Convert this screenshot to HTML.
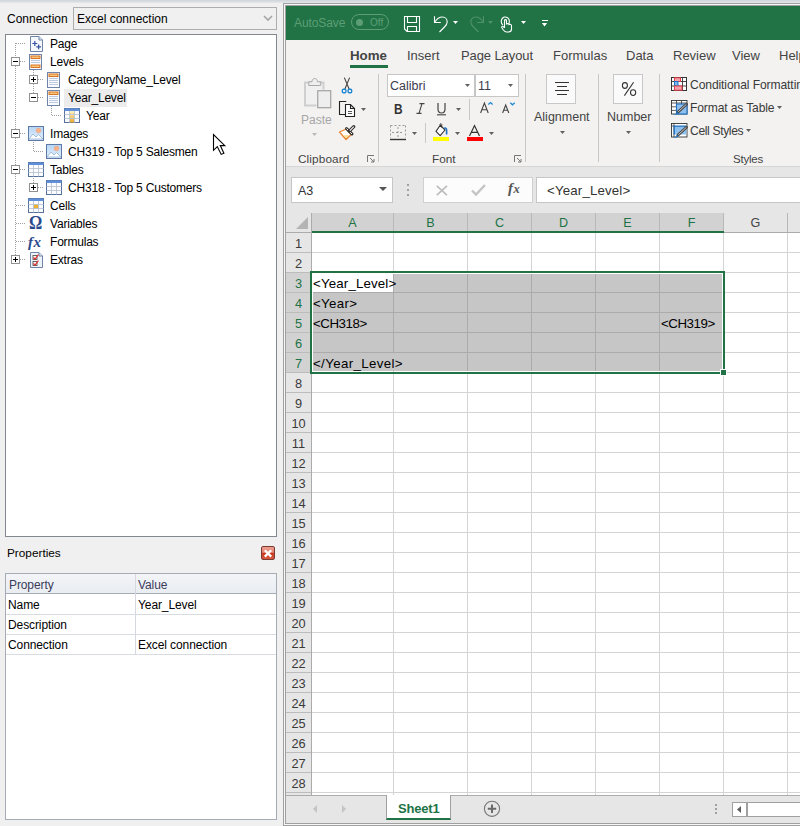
<!DOCTYPE html>
<html><head><meta charset="utf-8">
<style>
*{box-sizing:border-box;margin:0;padding:0}
html,body{width:800px;height:826px;overflow:hidden}
body{position:relative;background:#f0f0f0;font-family:"Liberation Sans",sans-serif;font-size:12px;color:#000}
div{position:absolute}
.t{white-space:nowrap;line-height:1}
svg{position:absolute;overflow:visible}
.tr{height:18px;line-height:20px;font-size:12px;letter-spacing:-0.2px;white-space:nowrap;color:#000}
.exp{width:9px;height:9px;border:1px solid #919191;background:#fff}
.exp:before{content:"";position:absolute;left:1px;top:3px;width:5px;height:1px;background:#000}
.exp.p:after{content:"";position:absolute;left:3px;top:1px;width:1px;height:5px;background:#000}
.dv{width:1px;background-image:linear-gradient(#a0a0a0 50%,transparent 50%);background-size:1px 2px}
.dh{height:1px;background-image:linear-gradient(90deg,#a0a0a0 50%,transparent 50%);background-size:2px 1px}
.tab{top:48px;font-size:13px;color:#444;line-height:16px;white-space:nowrap}
.grp{top:152px;font-size:11.8px;color:#444;line-height:14px;white-space:nowrap}
.sep{width:1px;background:#c8c8c8}
.arr{width:5px;height:3px;background:#606060;clip-path:polygon(0 0,100% 0,50% 100%)}
.rh{left:286px;width:25px;height:19px;line-height:22px;text-align:center;font-size:12.8px;color:#3a3a3a;background:#e6e6e6}
.rh.s{background:#d2d2d2;color:#217346}
.ch{top:213px;height:18px;line-height:21px;text-align:center;font-size:12.6px;color:#444;background:#e6e6e6}
.ch.s{background:#d2d2d2;color:#217346}
.cell{font-size:13.3px;line-height:21px;white-space:nowrap;color:#000}
</style></head><body>

<div style="left:0;top:0;width:800px;height:3px;background:linear-gradient(#cfd4da,#e4e7ea)"></div>
<div class="t" style="left:7px;top:13px;font-size:12px">Connection</div>
<div style="left:73px;top:7px;width:204px;height:23px;border:1px solid #adadad;background:#f0f0f0"></div>
<div class="t" style="left:77px;top:13px;font-size:12px">Excel connection</div>
<svg style="left:263px;top:15px" width="10" height="7"><path d="M1 1 L5 5 L9 1" fill="none" stroke="#a6a6a6" stroke-width="1.6"/></svg>
<div style="left:5px;top:34px;width:272px;height:503px;border:1px solid #828790;background:#fff"></div>
<div class="dv" style="left:15px;top:43px;height:14px"></div>
<div class="dv" style="left:15px;top:66px;height:63px"></div>
<div class="dv" style="left:15px;top:138px;height:27px"></div>
<div class="dv" style="left:15px;top:174px;height:81px"></div>
<div class="dh" style="left:16px;top:43px;width:10px"></div>
<div class="dh" style="left:20px;top:61px;width:6px"></div>
<div class="dh" style="left:20px;top:133px;width:6px"></div>
<div class="dh" style="left:20px;top:169px;width:6px"></div>
<div class="dh" style="left:20px;top:259px;width:6px"></div>
<div class="dh" style="left:16px;top:205px;width:10px"></div>
<div class="dh" style="left:16px;top:223px;width:10px"></div>
<div class="dh" style="left:16px;top:241px;width:10px"></div>
<div class="dv" style="left:33px;top:70px;height:5px"></div>
<div class="dv" style="left:33px;top:84px;height:9px"></div>
<div class="dh" style="left:38px;top:79px;width:6px"></div>
<div class="dh" style="left:38px;top:97px;width:6px"></div>
<div class="dv" style="left:51px;top:106px;height:10px"></div>
<div class="dh" style="left:52px;top:115px;width:10px"></div>
<div class="dv" style="left:33px;top:142px;height:10px"></div>
<div class="dh" style="left:34px;top:151px;width:10px"></div>
<div class="dv" style="left:33px;top:178px;height:5px"></div>
<div class="dh" style="left:38px;top:187px;width:6px"></div>
<div class="exp" style="left:11px;top:57px"></div>
<div class="exp p" style="left:29px;top:75px"></div>
<div class="exp" style="left:29px;top:93px"></div>
<div class="exp" style="left:11px;top:129px"></div>
<div class="exp" style="left:11px;top:165px"></div>
<div class="exp p" style="left:29px;top:183px"></div>
<div class="exp p" style="left:11px;top:255px"></div>
<div style="left:64px;top:89px;width:63px;height:18px;background:#ececec"></div>
<svg style="left:30px;top:36px" width="13" height="16"><path d="M0.5 0.5 H9 L12.5 4 V15.5 H0.5 Z" fill="#f5f8fc" stroke="#6f84a6"/><path d="M9 0.5 V4 H12.5" fill="#dfe7f2" stroke="#6f84a6"/><path d="M2.3 7.5 H7.3 M4.8 5 V10 M6.3 10.8 H11 M8.65 8.5 V13.2" stroke="#3552a0" stroke-width="1.2"/></svg>
<svg style="left:29px;top:54px" width="13" height="16"><rect x="0.5" y="0.5" width="12" height="15" fill="#f9fbfe" stroke="#6f84a6"/><rect x="2" y="2" width="9" height="2.5" fill="#f4c680" stroke="#d86a10" stroke-width="0.9"/><path d="M2 6.5 H11 M2 8.5 H11" stroke="#b4c4dc" stroke-width="0.9"/><rect x="2" y="11" width="9" height="2.5" fill="#f4c680" stroke="#d86a10" stroke-width="0.9"/></svg>
<svg style="left:47px;top:72px" width="13" height="16"><rect x="0.5" y="0.5" width="12" height="15" fill="#f9fbfe" stroke="#6f84a6"/><rect x="2" y="2" width="9" height="2.5" fill="#f4c680" stroke="#d86a10" stroke-width="0.9"/><path d="M2 6.5 H11 M2 8.5 H11 M2 10.5 H11 M2 12.5 H11" stroke="#b4c4dc" stroke-width="0.9"/></svg>
<svg style="left:47px;top:90px" width="13" height="16"><rect x="0.5" y="0.5" width="12" height="15" fill="#f9fbfe" stroke="#6f84a6"/><rect x="2" y="2" width="9" height="2.5" fill="#f4c680" stroke="#d86a10" stroke-width="0.9"/><path d="M2 6.5 H11 M2 8.5 H11 M2 10.5 H11 M2 12.5 H11" stroke="#b4c4dc" stroke-width="0.9"/></svg>
<svg style="left:64px;top:108px" width="16" height="15"><rect x="0.5" y="0.5" width="15" height="14" fill="#fafcff" stroke="#55709a"/><rect x="0.5" y="0.5" width="15" height="2.5" fill="#5f8fd8" stroke="none"/><defs><linearGradient id="gy" x1="0" y1="0" x2="0" y2="1"><stop offset="0" stop-color="#fff2c0"/><stop offset="1" stop-color="#e8a830"/></linearGradient></defs><rect x="5.5" y="3" width="5" height="11.5" fill="url(#gy)"/><path d="M0.5 6.5 H15.5 M0.5 10.5 H15.5 M5.5 3 V14.5 M10.5 3 V14.5" stroke="#b9c4d4" stroke-width="0.9"/></svg>
<svg style="left:28px;top:126px" width="16" height="15"><defs><linearGradient id="gi" x1="0" y1="0" x2="0" y2="1"><stop offset="0" stop-color="#b5d5f5"/><stop offset="1" stop-color="#e6f1fc"/></linearGradient></defs><rect x="0.5" y="0.5" width="15" height="14" fill="url(#gi)" stroke="#5d7aa6"/><circle cx="10.5" cy="4.5" r="2.3" fill="#fbb48a" stroke="#f59a70" stroke-width="0.6"/><path d="M1 13 L5 8 L8 11 L10.5 8.5 L15 13 Z" fill="#fff" stroke="#8fb0d8" stroke-width="0.8"/></svg>
<svg style="left:46px;top:144px" width="16" height="15"><defs><linearGradient id="gi" x1="0" y1="0" x2="0" y2="1"><stop offset="0" stop-color="#b5d5f5"/><stop offset="1" stop-color="#e6f1fc"/></linearGradient></defs><rect x="0.5" y="0.5" width="15" height="14" fill="url(#gi)" stroke="#5d7aa6"/><circle cx="10.5" cy="4.5" r="2.3" fill="#fbb48a" stroke="#f59a70" stroke-width="0.6"/><path d="M1 13 L5 8 L8 11 L10.5 8.5 L15 13 Z" fill="#fff" stroke="#8fb0d8" stroke-width="0.8"/></svg>
<svg style="left:28px;top:162px" width="16" height="15"><rect x="0.5" y="0.5" width="15" height="14" fill="#fafcff" stroke="#55709a"/><rect x="0.5" y="0.5" width="15" height="2.5" fill="#5f8fd8" stroke="none"/><path d="M0.5 6.5 H15.5 M0.5 10.5 H15.5 M5.5 3 V14.5 M10.5 3 V14.5" stroke="#b9c4d4" stroke-width="0.9"/></svg>
<svg style="left:46px;top:180px" width="16" height="15"><rect x="0.5" y="0.5" width="15" height="14" fill="#fafcff" stroke="#55709a"/><rect x="0.5" y="0.5" width="15" height="2.5" fill="#5f8fd8" stroke="none"/><path d="M0.5 6.5 H15.5 M0.5 10.5 H15.5 M5.5 3 V14.5 M10.5 3 V14.5" stroke="#b9c4d4" stroke-width="0.9"/></svg>
<svg style="left:28px;top:198px" width="16" height="15"><rect x="0.5" y="0.5" width="15" height="14" fill="#fafcff" stroke="#55709a"/><rect x="0.5" y="0.5" width="15" height="2.5" fill="#5f8fd8" stroke="none"/><rect x="5.5" y="6.5" width="5" height="4" fill="#f0b030" stroke="#c08020" stroke-width="0.6"/><path d="M0.5 6.5 H15.5 M0.5 10.5 H15.5 M5.5 3 V14.5 M10.5 3 V14.5" stroke="#b9c4d4" stroke-width="0.9"/></svg>
<div class="t" style="left:29px;top:214px;font-family:Liberation Serif,serif;font-weight:bold;font-size:18px;color:#2b4a8c;transform:scaleX(0.92);transform-origin:0 0">&#937;</div>
<div class="t" style="left:28px;top:235px;font-family:Liberation Serif,serif;font-style:italic;font-weight:bold;font-size:15px;color:#2b4a8c">f<span style="font-size:15px;margin-left:0.5px">x</span></div>
<svg style="left:30px;top:252px" width="13" height="16"><path d="M0.5 0.5 H9 L12.5 4 V15.5 H0.5 Z" fill="#eef3fa" stroke="#6f84a6"/><path d="M9 0.5 V4 H12.5" fill="#dfe7f2" stroke="#6f84a6"/><rect x="3" y="3.5" width="4" height="4" fill="#fff" stroke="#555" stroke-width="0.9"/><rect x="3" y="9.5" width="4" height="4" fill="#fff" stroke="#555" stroke-width="0.9"/><path d="M3.5 5.5 L5 7 L8.5 2.5 M3.5 11.5 L5 13 L8.5 8.5" fill="none" stroke="#e8302a" stroke-width="1.2"/></svg>
<div class="tr" style="left:50px;top:34px">Page</div>
<div class="tr" style="left:50px;top:52px">Levels</div>
<div class="tr" style="left:68px;top:70px">CategoryName_Level</div>
<div class="tr" style="left:68px;top:88px">Year_Level</div>
<div class="tr" style="left:86px;top:106px">Year</div>
<div class="tr" style="left:50px;top:124px">Images</div>
<div class="tr" style="left:68px;top:142px">CH319 - Top 5 Salesmen</div>
<div class="tr" style="left:50px;top:160px">Tables</div>
<div class="tr" style="left:68px;top:178px">CH318 - Top 5 Customers</div>
<div class="tr" style="left:50px;top:196px">Cells</div>
<div class="tr" style="left:50px;top:214px">Variables</div>
<div class="tr" style="left:50px;top:232px">Formulas</div>
<div class="tr" style="left:50px;top:250px">Extras</div>
<div class="t" style="left:7px;top:548px;font-size:11.8px">Properties</div>
<div style="left:261px;top:546px;width:14px;height:14px;border:1px solid #7a3a30;border-radius:2px;background:linear-gradient(#ec9f90 0%,#e48272 45%,#c8381f 50%,#d65a40 100%)"></div>
<svg style="left:261px;top:546px" width="14" height="14"><path d="M3.8 4.2 L10.2 10.6 M10.2 4.2 L3.8 10.6" stroke="#fff" stroke-width="2.3"/></svg>
<div style="left:5px;top:573px;width:272px;height:247px;border:1px solid #a5acb5;background:#fff"></div>
<div style="left:6px;top:574px;width:270px;height:20px;background:linear-gradient(#f3f5f8,#e9ecf1);border-bottom:1px solid #a5acb5"></div>
<div style="left:135px;top:574px;width:1px;height:80px;background:#d5d9df"></div>
<div style="left:6px;top:614px;width:270px;height:1px;background:#d8dce2"></div>
<div style="left:6px;top:634px;width:270px;height:1px;background:#d8dce2"></div>
<div style="left:6px;top:654px;width:270px;height:1px;background:#d8dce2"></div>
<div class="tr" style="left:9px;top:575px;letter-spacing:-0.1px;font-size:12px;color:#3b3b5b">Property</div>
<div class="tr" style="left:138px;top:575px;letter-spacing:-0.1px;font-size:12px;color:#3b3b5b">Value</div>
<div class="tr" style="left:8px;top:595px;letter-spacing:-0.1px;font-size:12px">Name</div>
<div class="tr" style="left:138px;top:595px;letter-spacing:-0.1px;font-size:12px">Year_Level</div>
<div class="tr" style="left:8px;top:615px;letter-spacing:-0.1px;font-size:12px">Description</div>
<div class="tr" style="left:8px;top:635px;letter-spacing:-0.1px;font-size:12px">Connection</div>
<div class="tr" style="left:138px;top:635px;letter-spacing:-0.1px;font-size:12px">Excel connection</div>
<svg style="left:212px;top:133px" width="15" height="24"><path d="M1.5 1.5 V17.3 L5.3 13.6 L9.2 21.4 L11.9 20.3 L8.3 12.6 L12.8 12.6 Z" fill="#fff" stroke="#000" stroke-width="1.1" stroke-linejoin="miter"/></svg>
<div style="left:283px;top:3px;width:517px;height:823px;border-left:1px solid #a0a0a0;border-top:1px solid #a0a0a0;border-bottom:1px solid #a0a0a0;background:#f7f7f7"></div>
<div style="left:285px;top:5px;width:515px;height:819px;border-left:1px solid #a0a0a0;border-top:1px solid #a0a0a0;border-bottom:1px solid #a0a0a0;background:#e6e6e6"></div>
<div style="left:286px;top:6px;width:514px;height:34px;background:#217346"></div>
<div style="left:286px;top:40px;width:514px;height:127px;background:#f3f2f1;border-bottom:1px solid #d5d5d5"></div>
<div class="t" style="left:294px;top:17px;font-size:12px;color:#5d9e75;letter-spacing:-0.1px">AutoSave</div>
<div style="left:351px;top:14px;width:38px;height:16px;border:1px solid #5d9e75;border-radius:8px"></div>
<div style="left:355.5px;top:19px;width:7px;height:7px;border-radius:4px;background:#5d9e75"></div>
<div class="t" style="left:370px;top:18px;font-size:10px;color:#5d9e75">Off</div>
<svg style="left:404px;top:16px" width="16" height="16"><path d="M0.5 0.5 H15.5 V15.5 H3 L0.5 13 Z M3.5 0.5 V6.5 H12.5 V0.5 M3.5 15.5 V10.5 H12.5 V15.5" fill="none" stroke="#fff" stroke-width="1.1"/></svg>
<svg style="left:433px;top:15px" width="16" height="18"><path d="M1.5 1.3 V7.5 H7.8" fill="none" stroke="#fff" stroke-width="1.1"/><path d="M1.8 7.2 C4 3.5 7 2 9.5 2 C12.5 2 14.2 4.5 14.2 7 C14.2 9 13 10.5 11.5 12 L6.5 17" fill="none" stroke="#fff" stroke-width="1.1"/></svg>
<div class="arr" style="left:453px;top:21px;background:#fff;"></div>
<svg style="left:469px;top:15px" width="16" height="18"><path d="M14.5 1.3 V7.5 H8.2" fill="none" stroke="#4e9268" stroke-width="1.1"/><path d="M14.2 7.2 C12 3.5 9 2 6.5 2 C3.5 2 1.8 4.5 1.8 7 C1.8 9 3 10.5 4.5 12 L9.5 17" fill="none" stroke="#4e9268" stroke-width="1.1"/></svg>
<div class="arr" style="left:488px;top:21px;background:#4e9268"></div>
<svg style="left:500px;top:16px" width="13" height="17"><path d="M3 9 C0.5 7.5 0.5 2 4.5 1 C8.5 0.5 10 4 9 7.5 M4.5 12 V4.5 C4.5 3.3 6.5 3.3 6.5 4.5 V8 C8 7.3 9 7.7 9 8.6 C10.2 8 11.5 8.5 11.5 9.8 V13 C11.5 15 10 16 8.5 16 H6.5 C5 16 4 15 3 13.5 L1.8 11.5 C1.3 10.5 2.5 9.8 3.3 10.7 L4.5 12" fill="none" stroke="#fff" stroke-width="1.1"/></svg>
<div class="arr" style="left:521px;top:21px;background:#fff"></div>
<div style="left:541.5px;top:19.5px;width:6px;height:1.6px;background:#fff"></div>
<div class="arr" style="left:541.5px;top:22.5px;width:6px;height:4px;background:#fff;"></div>
<div class="tab" style="left:350px;font-weight:bold;color:#444;font-size:13.3px">Home</div>
<div style="left:350px;top:65px;width:38px;height:3px;background:#217346"></div>
<div class="tab" style="left:407px;letter-spacing:0px">Insert</div>
<div class="tab" style="left:461px;letter-spacing:-0.1px">Page Layout</div>
<div class="tab" style="left:553px;letter-spacing:0px">Formulas</div>
<div class="tab" style="left:626px;letter-spacing:0px">Data</div>
<div class="tab" style="left:673px;letter-spacing:0px">Review</div>
<div class="tab" style="left:732px;letter-spacing:0px">View</div>
<div class="tab" style="left:779px;letter-spacing:0px">Help</div>
<svg style="left:298px;top:72px" width="40" height="40"><rect x="7" y="10.5" width="18.5" height="23" fill="#f0f0f0" stroke="#cfcfcf" stroke-width="2"/><path d="M10.75 13.5 V9.75 H14 C14 7.8 15.3 6.5 16.75 6.5 C18.2 6.5 19.5 7.8 19.5 9.75 H22.75 V13.5 Z" fill="#eeeeee" stroke="#a9a9a9" stroke-width="1"/><rect x="18.5" y="17.5" width="15" height="19" fill="#f3f2f1"/><rect x="19.75" y="18.75" width="13" height="17" fill="#eeeeee" stroke="#999" stroke-width="1.1"/></svg>
<div class="t" style="left:301px;top:114px;font-size:12px;color:#a6a6a6">Paste</div>
<div class="arr" style="left:312px;top:133px;background:#b8b8b8;"></div>
<svg style="left:340px;top:77px" width="14" height="17"><path d="M4.35 0.6 L9.2 12.3 M9.6 0.6 L4.8 12.3" stroke="#444" stroke-width="1.1"/><rect x="2.3" y="12.2" width="3.6" height="3.6" rx="1.2" fill="none" stroke="#1e88d2" stroke-width="1.4"/><rect x="8.1" y="12.2" width="3.6" height="3.6" rx="1.2" fill="none" stroke="#1e88d2" stroke-width="1.4"/></svg>
<svg style="left:339px;top:101px" width="17" height="17"><path d="M7.3 0.5 H0.5 V13.5 H6" fill="none" stroke="#222" stroke-width="1.1"/><path d="M6.5 3.5 H11.5 L15.5 7.5 V15.5 H6.5 Z M11.5 3.5 V7.5 H15.5" fill="#fff" stroke="#222" stroke-width="1.1"/><path d="M9 10.5 H13 M9 12.5 H13" stroke="#444" stroke-width="0.9"/></svg>
<div class="arr" style="left:361px;top:108px;"></div>
<svg style="left:335px;top:120px" width="25" height="25"><path d="M4.5 12 L11.3 9 L16.3 14.5 L11 19.5 Z" fill="#fff" stroke="#e8822f" stroke-width="1.3" stroke-linejoin="round"/><path d="M8 15.3 L14 15.3 L11 18.3 Z" fill="#f9d98a"/><path d="M11.5 8.5 L17 14" stroke="#333" stroke-width="3" stroke-linecap="round"/><path d="M11.5 8.5 L17 14" stroke="#fff" stroke-width="1"/><path d="M14.3 11.2 L18.8 6.7" stroke="#333" stroke-width="3.2" stroke-linecap="round"/><path d="M14.8 10.7 L18.8 6.7" stroke="#fff" stroke-width="1.1"/></svg>
<div class="grp" style="left:298px;letter-spacing:0.1px">Clipboard</div>
<svg style="left:367px;top:155px" width="8" height="8"><path d="M0.5 7 V0.5 H7 M3 3 L7 7 M7 4 V7 H4" fill="none" stroke="#777" stroke-width="1"/></svg>
<div class="sep" style="left:378px;top:74px;height:88px"></div>
<div style="left:387px;top:74px;width:88px;height:23px;background:#fff;border:1px solid #c6c6c6"></div>
<div class="t" style="left:390px;top:80px;font-size:12.5px;color:#3c3c50">Calibri</div>
<div class="arr" style="left:465px;top:84px;"></div>
<div style="left:475px;top:74px;width:44px;height:23px;background:#fff;border:1px solid #c6c6c6"></div>
<div class="t" style="left:478px;top:80px;font-size:12.5px;color:#3c3c50">11</div>
<div class="arr" style="left:508px;top:84px;"></div>
<div class="t" style="left:394px;top:102px;font-size:14px;font-weight:bold;color:#333;transform:scaleX(0.85);transform-origin:0 0">B</div>
<svg style="left:416px;top:103px" width="9" height="11"><path d="M3.5 0.6 H8.5 M6 0.6 L3 10.4 M0.5 10.4 H5.5" fill="none" stroke="#444" stroke-width="1.1"/></svg>
<svg style="left:437px;top:103px" width="10" height="13"><path d="M1 0 V6 C1 8.6 2.6 10 4.5 10 C6.4 10 8 8.6 8 6 V0" fill="none" stroke="#444" stroke-width="1.2"/><path d="M0 11.8 H9" stroke="#444" stroke-width="1.1"/></svg>
<div class="arr" style="left:456px;top:108px;"></div>
<div class="sep" style="left:469px;top:99px;height:21px"></div>
<svg style="left:480px;top:102px" width="14" height="12"><path d="M0.6 11 L4.4 1 L8.2 11 M1.9 7.8 H6.9" fill="none" stroke="#444" stroke-width="1.1"/><path d="M8.3 2.6 L10.5 0.6 L12.7 2.6" fill="none" stroke="#1e88d2" stroke-width="1.3"/></svg>
<svg style="left:502px;top:102px" width="14" height="12"><path d="M0.6 11 L3.7 3 L6.8 11 M1.7 8.3 H5.7" fill="none" stroke="#444" stroke-width="1.1"/><path d="M8.3 0.8 L10.5 2.8 L12.7 0.8" fill="none" stroke="#1e88d2" stroke-width="1.3"/></svg>
<svg style="left:390px;top:125px" width="16" height="16"><path d="M0.5 0.5 H15.5 M0.5 0.5 V13 M15.5 0.5 V13 M8 2 V13 M2 7.5 H14" fill="none" stroke="#9a9a9a" stroke-dasharray="2 2"/><path d="M0 14.5 H16" stroke="#333" stroke-width="1.4"/></svg>
<div class="arr" style="left:412px;top:132px;"></div>
<div class="sep" style="left:425px;top:123px;height:20px"></div>
<svg style="left:434px;top:123px" width="15" height="14"><path d="M2 8.4 L6.2 2.2 L11 7 L6.2 12.7 Z" fill="#fff" stroke="#333" stroke-width="1.1" stroke-linejoin="round"/><path d="M6.2 2.2 C5.5 0.5 7.3 0.2 7.8 1.5 L7.5 4.5" fill="none" stroke="#333" stroke-width="1"/><path d="M10 5.5 C11 4.5 12.6 5 12.6 7 V11.6" fill="none" stroke="#1e6fc0" stroke-width="1.6"/></svg>
<div style="left:433px;top:137px;width:16px;height:4px;background:#ffff00"></div>
<div class="arr" style="left:455px;top:132px;"></div>
<svg style="left:468px;top:125px" width="14" height="12"><path d="M1.5 11 L6.5 0.6 L11.5 11 M3.3 7.4 H9.7" fill="none" stroke="#333" stroke-width="1.2"/></svg>
<div style="left:467px;top:137px;width:16px;height:4px;background:#ff0000"></div>
<div class="arr" style="left:489px;top:132px;"></div>
<div class="grp" style="left:432px">Font</div>
<svg style="left:514px;top:155px" width="8" height="8"><path d="M0.5 7 V0.5 H7 M3 3 L7 7 M7 4 V7 H4" fill="none" stroke="#777" stroke-width="1"/></svg>
<div class="sep" style="left:525px;top:74px;height:88px"></div>
<div style="left:546px;top:74px;width:30px;height:30px;background:#fafafa;border:1px solid #c8c8c8"></div>
<svg style="left:554px;top:81px" width="16" height="15"><path d="M1 1.5 H15 M3 5.5 H13 M1 9.5 H15 M3 13.5 H13" stroke="#333" stroke-width="1.1"/></svg>
<div class="t" style="left:534px;top:111px;font-size:12.5px;color:#444">Alignment</div>
<div class="arr" style="left:560px;top:131px;"></div>
<div class="sep" style="left:598px;top:74px;height:88px"></div>
<div style="left:613px;top:74px;width:30px;height:30px;background:#fafafa;border:1px solid #c8c8c8"></div>
<svg style="left:620px;top:81px" width="18" height="16"><ellipse cx="4.9" cy="4.5" rx="2.5" ry="2.9" fill="none" stroke="#333" stroke-width="1.1"/><ellipse cx="13.1" cy="11.6" rx="2.6" ry="2.9" fill="none" stroke="#333" stroke-width="1.1"/><path d="M13.6 1.3 L4.4 14.6" stroke="#333" stroke-width="1.1"/></svg>
<div class="t" style="left:607px;top:111px;font-size:12.5px;color:#444">Number</div>
<div class="arr" style="left:626px;top:131px;"></div>
<div class="sep" style="left:659px;top:74px;height:88px"></div>
<svg style="left:671px;top:77px" width="16" height="14"><rect x="0.5" y="0.5" width="15" height="13" fill="#fff" stroke="#333"/><path d="M3.5 0.5 V13.5 M11.5 0.5 V13.5 M0.5 4.5 H15.5 M0.5 9 H15.5" stroke="#333" stroke-width="0.9"/><rect x="3.5" y="0.8" width="6" height="3.7" fill="#f4a3ab" stroke="#e03c46"/><rect x="3.5" y="4.5" width="3.5" height="4.5" fill="#7db6ea" stroke="#1e78c8"/><rect x="3.5" y="9" width="7.5" height="4.2" fill="#f4a3ab" stroke="#e03c46"/></svg>
<div class="t" style="left:690px;top:79px;font-size:12.1px;letter-spacing:-0.1px;color:#3a3a3a">Conditional Formatting</div>
<svg style="left:671px;top:100px" width="17" height="16"><rect x="0.5" y="0.5" width="15.5" height="13.5" fill="#fff" stroke="#333" stroke-width="0.9"/><path d="M0.5 3 H16 M0.5 6.8 H5.5 M0.5 10.4 H5.5 M5.5 0.5 V4 M10.5 0.5 V4" stroke="#333" stroke-width="0.8"/><rect x="5.5" y="4" width="10.5" height="10" fill="#8ec0ef" stroke="#1e6fc0" stroke-width="1.1"/><path d="M15.5 4.2 L6.8 12.2" stroke="#444" stroke-width="2.8" stroke-linecap="round"/><path d="M15.3 4.4 L7.2 11.8" stroke="#ddd" stroke-width="0.9"/><path d="M1.5 14.8 C3.8 14.8 5.2 13.6 6.2 11.8 L7.6 13 C6.3 14.6 4 15.3 1.5 14.8 Z" fill="#1e78c8"/></svg>
<div class="t" style="left:690px;top:102px;font-size:12.1px;letter-spacing:-0.14px;color:#3a3a3a">Format as Table</div>
<div class="arr" style="left:777px;top:106px;"></div>
<svg style="left:671px;top:123px" width="17" height="16"><rect x="0.5" y="0.5" width="15.5" height="13.5" fill="#fff" stroke="#333" stroke-width="0.9"/><path d="M0.5 3 H3 M3 0.5 V14" stroke="#333" stroke-width="0.8"/><rect x="3" y="3" width="12.5" height="8.5" fill="#8ec0ef"/><path d="M3.2 11.5 V3.2 H15.5" fill="none" stroke="#1e6fc0" stroke-width="1.3"/><path d="M15.5 4.2 L6.8 12.2" stroke="#444" stroke-width="2.8" stroke-linecap="round"/><path d="M15.3 4.4 L7.2 11.8" stroke="#ddd" stroke-width="0.9"/><path d="M1.5 14.8 C3.8 14.8 5.2 13.6 6.2 11.8 L7.6 13 C6.3 14.6 4 15.3 1.5 14.8 Z" fill="#1e78c8"/></svg>
<div class="t" style="left:690px;top:125px;font-size:12.1px;letter-spacing:-0.35px;color:#3a3a3a">Cell Styles</div>
<div class="arr" style="left:746px;top:129px;"></div>
<div class="grp" style="left:733px;font-size:11.5px;letter-spacing:-0.2px">Styles</div>
<div style="left:291px;top:177px;width:102px;height:26px;background:#fff;border:1px solid #c6c6c6"></div>
<div class="t" style="left:298px;top:185px;font-size:12.5px;color:#333">A3</div>
<div class="arr" style="left:379px;top:187px;width:8px;height:4px;background:#555"></div>
<div style="left:407px;top:184px;width:2px;height:2px;background:#a0a0a0"></div>
<div style="left:407px;top:189px;width:2px;height:2px;background:#a0a0a0"></div>
<div style="left:407px;top:194px;width:2px;height:2px;background:#a0a0a0"></div>
<div style="left:423px;top:177px;width:110px;height:26px;background:#fcfcfc;border:1px solid #d0d0d0"></div>
<svg style="left:436px;top:185px" width="12" height="11"><path d="M0.8 0.8 L11 10.2 M11 0.8 L0.8 10.2" stroke="#bcbcbc" stroke-width="1.6"/></svg>
<svg style="left:471px;top:184px" width="15" height="12"><path d="M1 6.5 L5 10.5 L14 1" fill="none" stroke="#c4c4c4" stroke-width="2.4"/></svg>
<div class="t" style="left:508px;top:181px;font-size:15px;font-style:italic;font-weight:bold;color:#555;font-family:Liberation Serif,serif">f<span style="font-size:12.5px;margin-left:0.5px">x</span></div>
<div style="left:536px;top:177px;width:264px;height:26px;background:#fff;border:1px solid #c6c6c6;border-right:none"></div>
<div class="t" style="left:547px;top:184px;font-size:13.3px;letter-spacing:0.15px;color:#333">&lt;Year_Level&gt;</div>
<div style="left:286px;top:213px;width:25px;height:19px;background:#e6e6e6"></div>
<svg style="left:286px;top:213px" width="25" height="19"><path d="M10 16 L22 16 L22 4 Z" fill="#b4b4b4"/></svg>
<div style="left:312px;top:233px;width:488px;height:562px;background:#fff"></div>
<div class="ch s" style="left:312px;width:81px;">A</div>
<div class="ch s" style="left:394px;width:73px;">B</div>
<div class="ch s" style="left:468px;width:63px;">C</div>
<div class="ch s" style="left:532px;width:63px;">D</div>
<div class="ch s" style="left:596px;width:63px;">E</div>
<div class="ch s" style="left:660px;width:63px;">F</div>
<div class="ch" style="left:724px;width:63px;">G</div>
<div class="ch" style="left:788px;width:63px;">H</div>
<div style="left:393px;top:213px;width:1px;height:19px;background:#b8b8b8"></div>
<div style="left:467px;top:213px;width:1px;height:19px;background:#b8b8b8"></div>
<div style="left:531px;top:213px;width:1px;height:19px;background:#b8b8b8"></div>
<div style="left:595px;top:213px;width:1px;height:19px;background:#b8b8b8"></div>
<div style="left:659px;top:213px;width:1px;height:19px;background:#b8b8b8"></div>
<div style="left:723px;top:213px;width:1px;height:19px;background:#b8b8b8"></div>
<div style="left:787px;top:213px;width:1px;height:19px;background:#b8b8b8"></div>
<div style="left:286px;top:232px;width:514px;height:1px;background:#ababab"></div>
<div style="left:312px;top:231px;width:412px;height:2px;background:#217346"></div>
<div style="left:311px;top:213px;width:1px;height:580px;background:#ababab"></div>
<div class="rh" style="top:233px">1</div>
<div style="left:286px;top:252px;width:25px;height:1px;background:#bcbcbc"></div>
<div class="rh" style="top:253px">2</div>
<div style="left:286px;top:272px;width:25px;height:1px;background:#bcbcbc"></div>
<div class="rh s" style="top:273px">3</div>
<div style="left:286px;top:292px;width:25px;height:1px;background:#bcbcbc"></div>
<div class="rh s" style="top:293px">4</div>
<div style="left:286px;top:312px;width:25px;height:1px;background:#bcbcbc"></div>
<div class="rh s" style="top:313px">5</div>
<div style="left:286px;top:332px;width:25px;height:1px;background:#bcbcbc"></div>
<div class="rh s" style="top:333px">6</div>
<div style="left:286px;top:352px;width:25px;height:1px;background:#bcbcbc"></div>
<div class="rh s" style="top:353px">7</div>
<div style="left:286px;top:372px;width:25px;height:1px;background:#bcbcbc"></div>
<div class="rh" style="top:373px">8</div>
<div style="left:286px;top:392px;width:25px;height:1px;background:#bcbcbc"></div>
<div class="rh" style="top:393px">9</div>
<div style="left:286px;top:412px;width:25px;height:1px;background:#bcbcbc"></div>
<div class="rh" style="top:413px">10</div>
<div style="left:286px;top:432px;width:25px;height:1px;background:#bcbcbc"></div>
<div class="rh" style="top:433px">11</div>
<div style="left:286px;top:452px;width:25px;height:1px;background:#bcbcbc"></div>
<div class="rh" style="top:453px">12</div>
<div style="left:286px;top:472px;width:25px;height:1px;background:#bcbcbc"></div>
<div class="rh" style="top:473px">13</div>
<div style="left:286px;top:492px;width:25px;height:1px;background:#bcbcbc"></div>
<div class="rh" style="top:493px">14</div>
<div style="left:286px;top:512px;width:25px;height:1px;background:#bcbcbc"></div>
<div class="rh" style="top:513px">15</div>
<div style="left:286px;top:532px;width:25px;height:1px;background:#bcbcbc"></div>
<div class="rh" style="top:533px">16</div>
<div style="left:286px;top:552px;width:25px;height:1px;background:#bcbcbc"></div>
<div class="rh" style="top:553px">17</div>
<div style="left:286px;top:572px;width:25px;height:1px;background:#bcbcbc"></div>
<div class="rh" style="top:573px">18</div>
<div style="left:286px;top:592px;width:25px;height:1px;background:#bcbcbc"></div>
<div class="rh" style="top:593px">19</div>
<div style="left:286px;top:612px;width:25px;height:1px;background:#bcbcbc"></div>
<div class="rh" style="top:613px">20</div>
<div style="left:286px;top:632px;width:25px;height:1px;background:#bcbcbc"></div>
<div class="rh" style="top:633px">21</div>
<div style="left:286px;top:652px;width:25px;height:1px;background:#bcbcbc"></div>
<div class="rh" style="top:653px">22</div>
<div style="left:286px;top:672px;width:25px;height:1px;background:#bcbcbc"></div>
<div class="rh" style="top:673px">23</div>
<div style="left:286px;top:692px;width:25px;height:1px;background:#bcbcbc"></div>
<div class="rh" style="top:693px">24</div>
<div style="left:286px;top:712px;width:25px;height:1px;background:#bcbcbc"></div>
<div class="rh" style="top:713px">25</div>
<div style="left:286px;top:732px;width:25px;height:1px;background:#bcbcbc"></div>
<div class="rh" style="top:733px">26</div>
<div style="left:286px;top:752px;width:25px;height:1px;background:#bcbcbc"></div>
<div class="rh" style="top:753px">27</div>
<div style="left:286px;top:772px;width:25px;height:1px;background:#bcbcbc"></div>
<div class="rh" style="top:773px">28</div>
<div style="left:286px;top:792px;width:25px;height:1px;background:#bcbcbc"></div>
<div style="left:312px;top:252px;width:488px;height:1px;background:#d4d4d4"></div>
<div style="left:312px;top:272px;width:488px;height:1px;background:#d4d4d4"></div>
<div style="left:312px;top:292px;width:488px;height:1px;background:#d4d4d4"></div>
<div style="left:312px;top:312px;width:488px;height:1px;background:#d4d4d4"></div>
<div style="left:312px;top:332px;width:488px;height:1px;background:#d4d4d4"></div>
<div style="left:312px;top:352px;width:488px;height:1px;background:#d4d4d4"></div>
<div style="left:312px;top:372px;width:488px;height:1px;background:#d4d4d4"></div>
<div style="left:312px;top:392px;width:488px;height:1px;background:#d4d4d4"></div>
<div style="left:312px;top:412px;width:488px;height:1px;background:#d4d4d4"></div>
<div style="left:312px;top:432px;width:488px;height:1px;background:#d4d4d4"></div>
<div style="left:312px;top:452px;width:488px;height:1px;background:#d4d4d4"></div>
<div style="left:312px;top:472px;width:488px;height:1px;background:#d4d4d4"></div>
<div style="left:312px;top:492px;width:488px;height:1px;background:#d4d4d4"></div>
<div style="left:312px;top:512px;width:488px;height:1px;background:#d4d4d4"></div>
<div style="left:312px;top:532px;width:488px;height:1px;background:#d4d4d4"></div>
<div style="left:312px;top:552px;width:488px;height:1px;background:#d4d4d4"></div>
<div style="left:312px;top:572px;width:488px;height:1px;background:#d4d4d4"></div>
<div style="left:312px;top:592px;width:488px;height:1px;background:#d4d4d4"></div>
<div style="left:312px;top:612px;width:488px;height:1px;background:#d4d4d4"></div>
<div style="left:312px;top:632px;width:488px;height:1px;background:#d4d4d4"></div>
<div style="left:312px;top:652px;width:488px;height:1px;background:#d4d4d4"></div>
<div style="left:312px;top:672px;width:488px;height:1px;background:#d4d4d4"></div>
<div style="left:312px;top:692px;width:488px;height:1px;background:#d4d4d4"></div>
<div style="left:312px;top:712px;width:488px;height:1px;background:#d4d4d4"></div>
<div style="left:312px;top:732px;width:488px;height:1px;background:#d4d4d4"></div>
<div style="left:312px;top:752px;width:488px;height:1px;background:#d4d4d4"></div>
<div style="left:312px;top:772px;width:488px;height:1px;background:#d4d4d4"></div>
<div style="left:312px;top:792px;width:488px;height:1px;background:#d4d4d4"></div>
<div style="left:393px;top:233px;width:1px;height:562px;background:#d4d4d4"></div>
<div style="left:467px;top:233px;width:1px;height:562px;background:#d4d4d4"></div>
<div style="left:531px;top:233px;width:1px;height:562px;background:#d4d4d4"></div>
<div style="left:595px;top:233px;width:1px;height:562px;background:#d4d4d4"></div>
<div style="left:659px;top:233px;width:1px;height:562px;background:#d4d4d4"></div>
<div style="left:723px;top:233px;width:1px;height:562px;background:#d4d4d4"></div>
<div style="left:787px;top:233px;width:1px;height:562px;background:#d4d4d4"></div>
<div style="left:310px;top:271px;width:415px;height:103px;border:2px solid #217346;background:#fff"></div>
<div style="left:313px;top:274px;width:409px;height:97px;background:#c6c6c6"></div>
<div style="left:313px;top:292px;width:409px;height:1px;background:#ababab"></div>
<div style="left:313px;top:312px;width:409px;height:1px;background:#ababab"></div>
<div style="left:313px;top:332px;width:409px;height:1px;background:#ababab"></div>
<div style="left:313px;top:352px;width:409px;height:1px;background:#ababab"></div>
<div style="left:393px;top:274px;width:1px;height:97px;background:#ababab"></div>
<div style="left:467px;top:274px;width:1px;height:97px;background:#ababab"></div>
<div style="left:531px;top:274px;width:1px;height:97px;background:#ababab"></div>
<div style="left:595px;top:274px;width:1px;height:97px;background:#ababab"></div>
<div style="left:659px;top:274px;width:1px;height:97px;background:#ababab"></div>
<div style="left:312px;top:273px;width:81px;height:19px;background:#fff"></div>
<div style="left:393px;top:293px;width:1px;height:0px;background:#c6c6c6"></div>
<div style="left:393px;top:353px;width:1px;height:19px;background:#c6c6c6"></div>
<div style="left:720px;top:369px;width:7px;height:7px;background:#fff"></div>
<div style="left:721px;top:370px;width:5px;height:5px;background:#217346"></div>
<div class="cell" style="left:313px;top:273px;letter-spacing:0.15px">&lt;Year_Level&gt;</div>
<div class="cell" style="left:313px;top:293px;letter-spacing:0.3px">&lt;Year&gt;</div>
<div class="cell" style="left:313px;top:313px;letter-spacing:-0.45px">&lt;CH318&gt;</div>
<div class="cell" style="left:661px;top:313px;letter-spacing:-0.45px">&lt;CH319&gt;</div>
<div class="cell" style="left:313px;top:353px;letter-spacing:0.35px">&lt;/Year_Level&gt;</div>
<div style="left:286px;top:793px;width:25px;height:2px;background:#e6e6e6"></div>
<div style="left:311px;top:793px;width:1px;height:2px;background:#ababab"></div>
<div style="left:286px;top:795px;width:514px;height:28px;background:#e6e6e6;border-top:1px solid #ababab"></div>
<div style="left:313px;top:805px;width:4px;height:8px;background:#c4c4c4;clip-path:polygon(100% 0,0 50%,100% 100%)"></div>
<div style="left:342px;top:805px;width:4px;height:8px;background:#c4c4c4;clip-path:polygon(0 0,100% 50%,0 100%)"></div>
<div style="left:386px;top:795px;width:65px;height:25px;background:#fff;border-left:1px solid #a0a0a0;border-right:1px solid #a0a0a0;border-bottom:2px solid #217346"></div>
<div class="t" style="left:398px;top:802px;font-size:13px;font-weight:bold;color:#217346;letter-spacing:-0.2px">Sheet1</div>
<svg style="left:483px;top:800px" width="18" height="18"><circle cx="9" cy="8.8" r="7.6" fill="none" stroke="#777" stroke-width="1.1"/><path d="M4.8 8.8 H13.2 M9 4.6 V13" stroke="#6a6a6a" stroke-width="2"/></svg>
<div style="left:715px;top:804px;width:2px;height:2px;background:#a0a0a0"></div>
<div style="left:715px;top:808px;width:2px;height:2px;background:#a0a0a0"></div>
<div style="left:715px;top:812px;width:2px;height:2px;background:#a0a0a0"></div>
<div style="left:732px;top:802px;width:68px;height:15px;background:#fff;border:1px solid #a0a0a0;border-right:none"></div>
<div style="left:746px;top:802px;width:2px;height:15px;background:#a0a0a0"></div>
<div style="left:737px;top:806px;width:4px;height:7px;background:#606060;clip-path:polygon(100% 0,0 50%,100% 100%)"></div>
</body></html>
